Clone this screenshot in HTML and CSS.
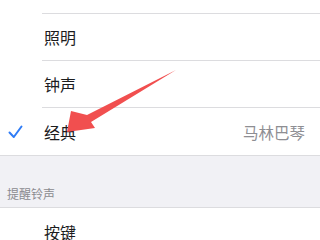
FILE: index.html
```html
<!DOCTYPE html>
<html lang="zh">
<head>
<meta charset="utf-8">
<link rel="stylesheet" href="styles.css">
</head>
<body>
<div class="screen">
  <div class="list">
    <div class="row"><span class="check"></span><div class="cell"><span class="label">雷达</span></div></div>
    <div class="row"><span class="check"></span><div class="cell"><span class="label">照明</span></div></div>
    <div class="row"><span class="check"></span><div class="cell"><span class="label">钟声</span></div></div>
    <div class="row"><span class="check">
      <svg width="15" height="14" viewBox="0 0 15 14"><path d="M1.5 7.5 L5.8 12 L13.5 1.5" fill="none" stroke="#2f7cf6" stroke-width="2" stroke-linecap="round" stroke-linejoin="round"/></svg>
    </span><div class="cell"><span class="label">经典</span><span class="value">马林巴琴</span></div></div>
  </div>
  <div class="section">提醒铃声</div>
  <div class="list">
    <div class="row"><span class="check"></span><div class="cell"><span class="label">按键</span></div></div>
  </div>
  <svg class="arrow" width="320" height="240" viewBox="0 0 320 240">
    <polygon points="176,70 87,115 71,111 67,132 95,128 91,122" fill="#f14f4f"/>
  </svg>
</div>
</body>
</html>
```
FILE: styles.css
```css
html, body {
  margin: 0;
  padding: 0;
  background: #ffffff;
}
.screen {
  position: relative;
  width: 320px;
  height: 240px;
  overflow: hidden;
  font-family: "Noto Sans CJK SC", "Noto Sans", sans-serif;
}
.list {
  background: #ffffff;
}
.list:first-child {
  margin-top: -33px;
}
.row {
  display: flex;
  height: 47px;
}
.check {
  width: 42px;
  flex: none;
  display: flex;
  align-items: center;
  padding-left: 8px;
  box-sizing: border-box;
}
.cell {
  flex: 1;
  display: flex;
  align-items: center;
  justify-content: space-between;
  border-bottom: 1px solid #dcdcdf;
  padding-right: 15px;
}
.row:last-child .cell {
  border-bottom: none;
}
.label {
  font-size: 16px;
  color: #1c1c1e;
  padding-left: 2px;
}
.value {
  font-size: 15.5px;
  color: #8e8e93;
}
.section {
  height: 44px;
  padding: 0 0 7px 7px;
  background: #f1f1f5;
  border-top: 1px solid #dcdcdf;
  border-bottom: 1px solid #dcdcdf;
  display: flex;
  align-items: flex-end;
  font-size: 12px;
  color: #8a8a8f;
  line-height: 1;
}
.arrow {
  position: absolute;
  left: 0;
  top: 0;
  pointer-events: none;
}
```
